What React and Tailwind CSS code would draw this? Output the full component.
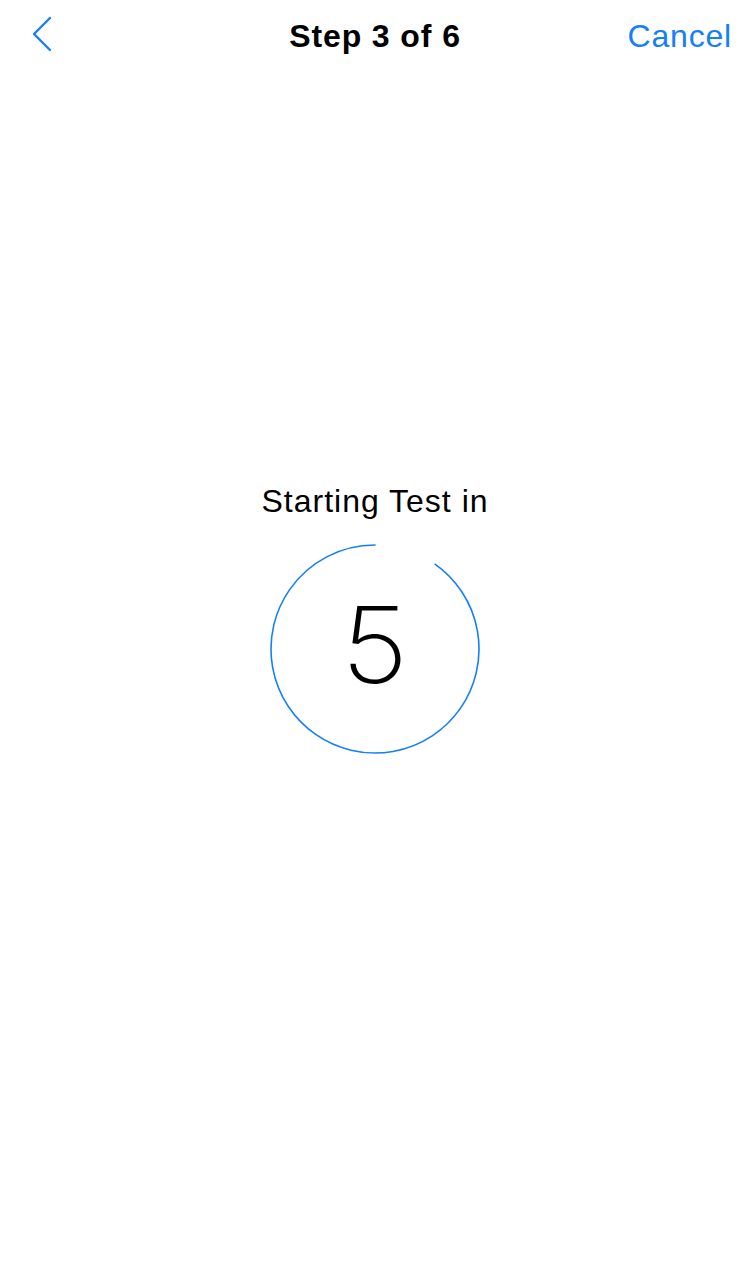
import React from "react";

function Chevron() {
  return (
    <svg width="22" height="36" viewBox="0 0 22 36" fill="none">
      <path d="M19 2 L3 18 L19 34" stroke="#147EFB" strokeWidth="2.4" strokeLinecap="round" strokeLinejoin="round" />
    </svg>
  );
}

function CountdownRing({ value }) {
  const r = 104;
  const c = 2 * Math.PI * r;
  const gap = (35 / 360) * c;
  return (
    <div className="relative w-[212px] h-[212px]">
      <svg width="212" height="212" viewBox="0 0 212 212" className="absolute inset-0">
        <circle
          cx="106"
          cy="106"
          r={r}
          fill="none"
          stroke="#147EFB"
          strokeWidth="1.6"
          strokeDasharray={`${c - gap} ${gap}`}
          transform="rotate(-55 106 106)"
        />
      </svg>
      <div className="absolute inset-0 flex items-center justify-center">
        <span className="text-[106px] leading-none font-[200] text-black font-['Inter',sans-serif] mt-[-8px] scale-x-110">
          {value}
        </span>
      </div>
    </div>
  );
}

export default function App() {
  return (
    <div className="w-[750px] h-[1285px] bg-white font-['Liberation_Sans',Arial,sans-serif] flex flex-col">
      <div className="h-[72px] grid grid-cols-[1fr_auto_1fr] items-center px-[18px]">
        <div className="flex items-center pl-[13px] mt-[-4px]">
          <Chevron />
        </div>
        <div className="text-[32px] font-bold text-black tracking-[0.9px]">Step 3 of 6</div>
        <div className="text-right text-[32px] text-[#147EFB] tracking-[0.8px]">Cancel</div>
      </div>
      <div className="flex flex-col items-center pt-[413px]">
        <div className="text-[32px] text-black leading-none tracking-[1px]">Starting Test in</div>
        <div className="mt-[26px]">
          <CountdownRing value="5" />
        </div>
      </div>
    </div>
  );
}
